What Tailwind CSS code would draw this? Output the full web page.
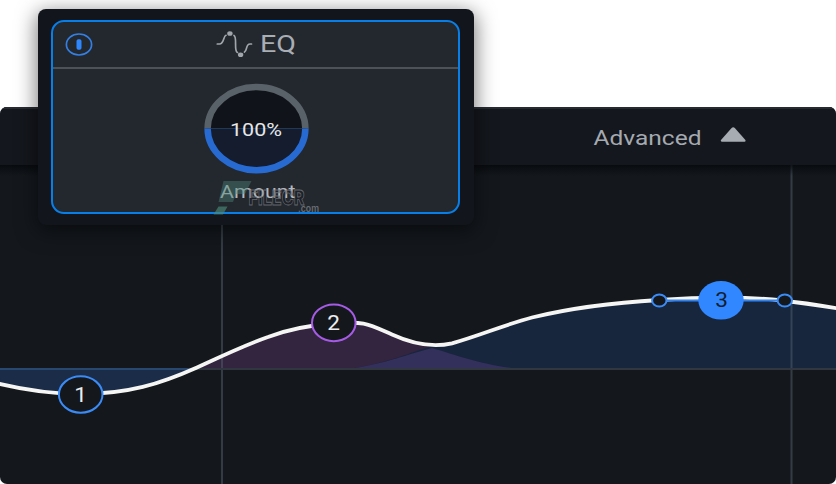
<!DOCTYPE html>
<html lang="en">
<head>
<meta charset="utf-8">
<title>EQ</title>
<script src="https://cdn.jsdelivr.net/npm/@tailwindcss/browser@4"></script>
</head>
<body class="bg-white font-['Roboto',sans-serif]">
<main class="relative flex h-[484px] w-[836px] flex-col overflow-hidden pt-[107px]">
  <section class="flex flex-1 flex-col overflow-hidden rounded-[7px] bg-[#14181d]">
    <header class="flex h-[58px] shrink-0 items-center justify-end gap-[18px] border-t-2 border-[#272b30] bg-[#14171d] pr-[90px]">
      <svg class="h-[30px] w-[109px]" viewBox="0 0 109 30"><text x="0.5" y="22.800" font-size="20.7" textLength="108" lengthAdjust="spacingAndGlyphs" fill="#a5aab1">Advanced</text></svg>
      <svg class="-mt-1 h-4 w-[26px]" viewBox="0 0 26 16"><path d="M11.6 .9Q13.2 -.5 14.8 .9L25.4 13Q26 14.5 24.5 14.7H1.8Q.2 14.500 1 13Z" fill="#a7acb3"/></svg>
    </header>
    <svg class="h-[319px] w-[836px] shrink-0" viewBox="0 165 836 319">
      <defs>
        <linearGradient id="headShade" x1="0" y1="0" x2="0" y2="1"><stop offset="0" stop-color="#05070a" stop-opacity=".75"/><stop offset="1" stop-color="#05070a" stop-opacity="0"/></linearGradient>
      </defs>
      <path d="M0 384C28 390 54 394.5 81 394.5C128 394.5 160 384 197 368.500H0Z" fill="#1a2c48"/>
      <path d="M197 368.500C222 357 245 345 268 337C289 329 312 324.500 334 323.500C366 321 368 324 392 334.500C414 344 427 346 436 345C475 350 490 363 515 368.500Z" fill="#33243f"/>
      <path d="M352 368.500C388 363 412 352 433 345.500C443 345 456 341 466 338C530 316 582 306 659 300C700 297.500 740 297 770 299C795 301 820 305.500 836 308V368.500Z" fill="#17263d"/>
      <path d="M352 368.500C388 363 408 354 432 348C459 356 479 364 515 368.500Z" fill="#34305c"/>
      <path d="M222 165V484M791.500 165V484" stroke="#52606d" stroke-opacity=".5" stroke-width="2"/>
      <path d="M0 369H836" stroke="#303740" stroke-width="2"/>
      <path d="M0 369H197" stroke="#29486f" stroke-width="2"/>
      <rect x="0" y="165" width="836" height="11" fill="url(#headShade)"/>
      <path d="M-2 383.500C27 390.500 54 394 81 394C128 394 160 384 197 367.500C222 356 245 345 268 337C289 329 312 325 334 323.500C366 321 368 324 392 334.500C416 345.500 434 347.500 452 343.300C480 335.500 502 325.500 532 317.500C575 307 616 302.500 659 300C700 297 750 296.500 782 300.500C805 303 820 305.500 838 308.500" fill="none" stroke="#f5f5f4" stroke-width="3.800"/>
      <path d="M659 300.500H785" stroke="#3184f3" stroke-width="2.200"/>
      <g fill="#14181d" stroke="#3b8bf7" stroke-width="2">
        <ellipse cx="659.300" cy="300.500" rx="7.200" ry="6.100"/>
        <ellipse cx="784.800" cy="300.500" rx="7.200" ry="6.100"/>
        <ellipse cx="80.700" cy="394.500" rx="21.800" ry="18.200"/>
        <ellipse cx="333.800" cy="322.800" rx="21.800" ry="18.400" stroke="#a65be6"/>
      </g>
      <ellipse cx="721" cy="300.300" rx="22.700" ry="19.300" fill="#3087ff"/>
      <g font-size="19.500">
        <text transform="translate(80.500 401.800) scale(1.16 1)" text-anchor="middle" fill="#ededee">1</text>
        <text transform="translate(333.500 330) scale(1.16 1)" text-anchor="middle" fill="#ededee">2</text>
        <text transform="translate(721.500 307.300) scale(1.16 1)" text-anchor="middle" fill="#101e32">3</text>
      </g>
    </svg>
  </section>

  <aside class="absolute left-[38px] top-[9px] h-[216px] w-[436px] rounded-[8px] bg-[#12151b] px-[13px] py-[11px] shadow-[0_5px_20px_2px_rgba(0,0,0,0.5)]">
    <div class="flex h-[194px] w-[409px] flex-col overflow-hidden rounded-[13px] border-2 border-[#087fe8] bg-[#23272e]">
      <div class="flex h-[47px] shrink-0 items-center border-b-2 border-[#4d5258] pl-[12px]">
        <svg class="h-6 w-7 shrink-0" viewBox="0 0 28 24"><ellipse cx="14" cy="11.500" rx="12.600" ry="10.500" fill="none" stroke="#347fe2" stroke-width="1.700"/><rect x="11.500" y="6.300" width="5" height="10.500" rx="1.800" fill="#2f87ff"/></svg>
        <svg class="ml-[123px] h-8 w-[37px] shrink-0" viewBox="216 28.500 37 32"><g fill="none" stroke="#a1a6ad" stroke-width="1.700" stroke-linecap="round"><path d="M217.300 43.500H219.500C224 43.500 223.300 35.500 226 34.800"/><path d="M234 35C237.500 36.500 233.500 51 237.500 52"/><path d="M244.500 51.500C247.500 50 245.500 43.500 250 43.500H251.500"/></g><ellipse cx="229.900" cy="33" rx="2.700" ry="2.300" fill="#a1a6ad"/><ellipse cx="240.600" cy="54.200" rx="2.700" ry="2.300" fill="#a1a6ad"/></svg>
        <svg class="ml-[6px] h-8 w-10 shrink-0" viewBox="259 28.500 40 32"><text x="260" y="51.900" font-size="24" textLength="36" lengthAdjust="spacingAndGlyphs" fill="#a9adb4">EQ</text></svg>
      </div>
      <svg class="h-[143px] w-[405px] shrink-0" viewBox="53 69 405 143">
        <ellipse cx="256.500" cy="128.600" rx="49" ry="41.500" fill="#101319"/>
        <path d="M207.500 128.600A49 41.500 0 0 0 305.500 128.600Z" fill="#141c2d"/>
        <path d="M211 128.500H302" stroke="#203959" stroke-width="1"/>
        <path d="M207.600 128.600A48.900 41.600 0 0 1 305.400 128.600" fill="none" stroke="#596269" stroke-width="6.500"/>
        <path d="M207.600 128.600A48.900 41.600 0 0 0 305.400 128.600" fill="none" stroke="#276bd2" stroke-width="6.500"/>
        <text x="230" y="136" font-size="17.800" textLength="52" lengthAdjust="spacingAndGlyphs" fill="#e6e7e9">100%</text>
        <text x="220" y="198" font-size="17.800" textLength="75.500" lengthAdjust="spacingAndGlyphs" fill="#b4b8be">Amount</text>
      </svg>
    </div>
  </aside>

  <svg class="absolute left-[210px] top-[178px] h-[40px] w-[115px]" viewBox="210 178 115 40">
    <path d="M223.500 181H251.500L245 194H236L233 202H218.500Z" fill="#4c8979" fill-opacity=".42"/>
    <path d="M218.500 206.500H227.500L223 214.500H213.500Z" fill="#4c8979" fill-opacity=".65"/>
    <g font-family="Inter, sans-serif" font-weight="800">
      <text x="248.500" y="205.200" font-size="19.500" textLength="56" lengthAdjust="spacingAndGlyphs" fill="#15181d" fill-opacity=".35" stroke="#7c8186" stroke-opacity=".75" stroke-width=".8">FILECR</text>
      <text x="298" y="211.500" font-size="10" font-weight="600" textLength="21" lengthAdjust="spacingAndGlyphs" fill="#686d72">.com</text>
    </g>
  </svg>
</main>
</body>
</html>
